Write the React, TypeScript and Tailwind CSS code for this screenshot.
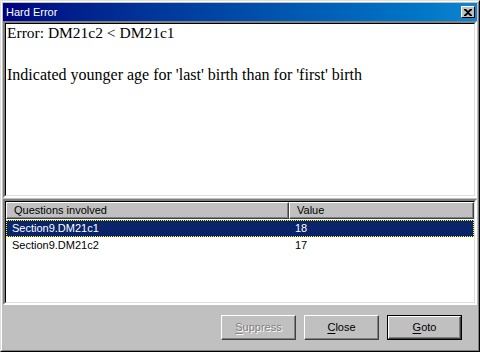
import React from 'react';

const sans = { fontFamily: '"Liberation Sans", Arial, sans-serif' };

function WinButton({ label, hot, disabled, isDefault }: { label: string; hot: number; disabled?: boolean; isDefault?: boolean }) {
  const before = label.slice(0, hot);
  const key = label[hot];
  const after = label.slice(hot + 1);
  const face = (
    <div className="w-full h-full border border-t-white border-l-white border-r-[#404040] border-b-[#404040] bg-[#c0c0c0] flex items-center justify-center shadow-[inset_-1px_-1px_0_#808080]">
      <span className={disabled ? 'text-[#808080] [text-shadow:1px_1px_0_#ffffff]' : 'text-black'}>
        {before}
        <span className="underline underline-offset-2">{key}</span>
        {after}
      </span>
    </div>
  );
  return (
    <div className={`w-[75px] h-[25px] text-[11px] ${isDefault ? 'border border-black' : ''}`} style={sans}>
      {face}
    </div>
  );
}

export default function App() {
  return (
    <div className="w-[480px] h-[352px] bg-[#c0c0c0] border border-t-[#dfdfdf] border-l-[#dfdfdf] border-r-black border-b-black">
      <div className="w-full h-full border border-t-white border-l-white border-r-[#808080] border-b-[#808080] p-px flex flex-col">
        {/* Title bar */}
        <div className="h-[18px] bg-gradient-to-r from-[#000080] to-[#1084d0] flex items-center justify-between pl-[3px] pr-[2px]">
          <span className="text-white text-[11px]" style={sans}>Hard Error</span>
          <div className="w-[14px] h-[12px] bg-[#c0c0c0] border border-t-white border-l-white border-r-black border-b-black flex items-center justify-center">
            <svg width="8" height="7" viewBox="0 0 8 7">
              <path d="M0 0h2l2 2 2-2h2v1L5 3.5 8 6v1H6L4 5 2 7H0V6l3-2.5L0 1z" fill="black" />
            </svg>
          </div>
        </div>

        {/* Message area */}
        <div className="h-[177px] bg-white border-2 border-t-[#808080] border-l-[#808080] border-r-white border-b-white">
          <div className="h-full border border-t-black border-l-black border-r-[#dfdfdf] border-b-[#dfdfdf] pl-px text-black" style={{ fontFamily: '"Liberation Serif", "Times New Roman", serif' }}>
            <div className="text-[15.5px] leading-[18px]">Error: DM21c2 &lt; DM21c1</div>
            <div className="h-[18px]" />
            <div className="text-[16px] leading-[18px] mt-[6px]">Indicated younger age for 'last' birth than for 'first' birth</div>
          </div>
        </div>

        {/* List view */}
        <div className="mt-px h-[106px] bg-white border-2 border-t-[#808080] border-l-[#808080] border-r-white border-b-white">
          <div className="h-full border border-t-black border-l-black border-r-[#dfdfdf] border-b-[#dfdfdf] text-[11px]" style={sans}>
            <div className="flex h-[17px]">
              <div className="w-[283px] bg-[#c0c0c0] border border-t-white border-l-white border-r-[#404040] border-b-[#404040] pl-[7px] flex items-center shadow-[inset_-1px_-1px_0_#808080]">Questions involved</div>
              <div className="flex-1 bg-[#c0c0c0] border border-t-white border-l-white border-r-[#404040] border-b-[#404040] pl-[7px] flex items-center shadow-[inset_-1px_-1px_0_#808080]">Value</div>
            </div>
            <div className="flex h-[17px] bg-[#0a246a] text-white outline-1 outline-dotted outline-[#ffff00] -outline-offset-1 mt-px">
              <div className="w-[283px] pl-[6px] flex items-center">Section9.DM21c1</div>
              <div className="flex-1 pl-[6px] flex items-center">18</div>
            </div>
            <div className="flex h-[17px] text-black">
              <div className="w-[283px] pl-[6px] flex items-center">Section9.DM21c2</div>
              <div className="flex-1 pl-[6px] flex items-center">17</div>
            </div>
          </div>
        </div>

        {/* Buttons */}
        <div className="flex-1 flex items-start justify-end gap-[8px] pt-[10px] pr-[15px]">
          <WinButton label="Suppress" hot={0} disabled />
          <WinButton label="Close" hot={0} />
          <WinButton label="Goto" hot={0} isDefault />
        </div>
      </div>
    </div>
  );
}
